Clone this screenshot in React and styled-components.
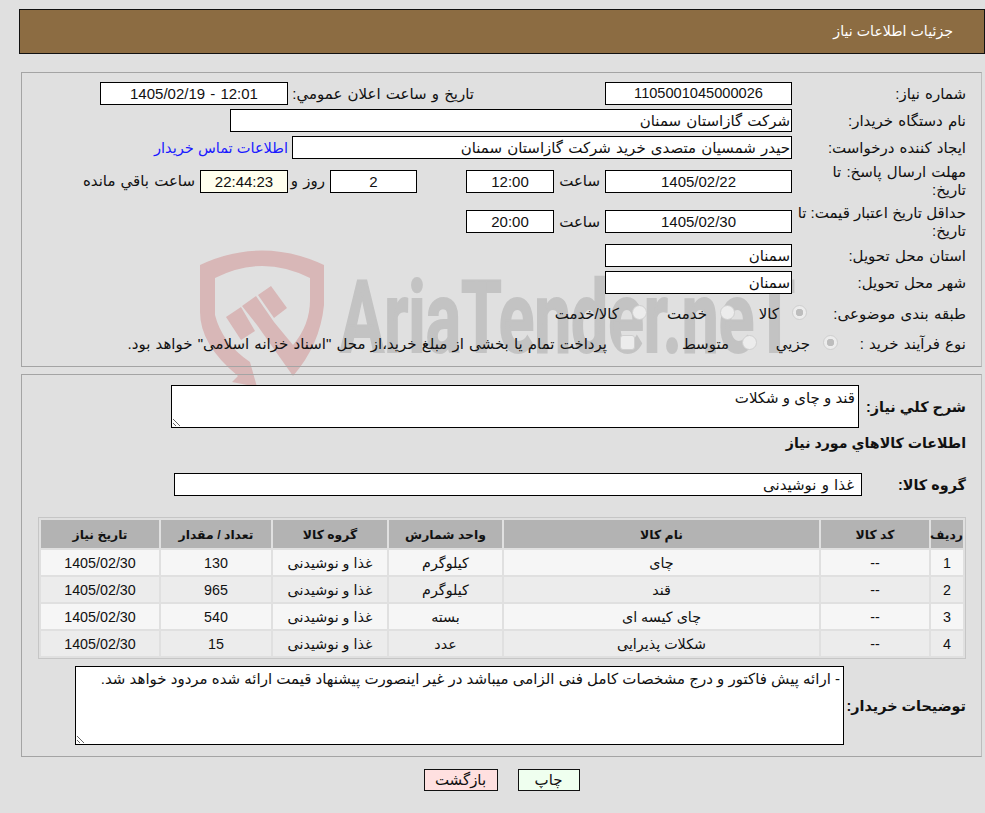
import React from 'react';
import styled, { createGlobalStyle } from 'styled-components';

const GlobalStyle = createGlobalStyle`
  html, body {
    margin: 0;
    padding: 0;
    background: #e0e0e0;
  }
  body {
    font-family: "Liberation Sans", "DejaVu Sans", sans-serif;
    font-size: 15px;
    word-spacing: 1px;
    color: #111;
  }
`;

const items = [
  { id: 1, code: '--', name: 'چای', unit: 'کیلوگرم', count: 130 },
  { id: 2, code: '--', name: 'قند', unit: 'کیلوگرم', count: 965 },
  { id: 3, code: '--', name: 'چای کیسه ای', unit: 'بسته', count: 540 },
  { id: 4, code: '--', name: 'شکلات پذیرایی', unit: 'عدد', count: 15 },
];

function Watermark() {
  return (
    <WatermarkSvg viewBox="0 0 985 400" width="985" height="400" aria-hidden="true">
      <g fill="#d8b7b7">
        <path d="M200 265 Q262 236 324 265 L324 305 Q320 345 293 376 L257 325 L242 306 L256 296 L274 322 L293 345 Q310 325 310 300 L310 278 Q262 254 215 278 L215 315 Q222 343 250 362 L257 387 L232 382 L238 376 Q200 345 200 312 Z" />
        <path d="M226 317 L241 307 L255 331 L241 340 Z" />
        <path d="M258 295 L271 286 L287 308 L274 318 Z" />
      </g>
      <WatermarkText x="340" y="352" textLength="455" lengthAdjust="spacingAndGlyphs">
        AriaTender.neT
      </WatermarkText>
    </WatermarkSvg>
  );
}

function App() {
  return (
    <Page dir="rtl">
      <GlobalStyle />
      <Watermark />
      <Header>جزئیات اطلاعات نیاز</Header>

      <InfoPanel>
        <Row>
          <Label>شماره نیاز:</Label>
          <Field $w={187} $center $size={14.6}>1105001045000026</Field>
          <InlineLabel $w={182} $mr={131}>تاریخ و ساعت اعلان عمومي:</InlineLabel>
          <Field $w={188} $mr={4} $center>1405/02/19 - 12:01</Field>
        </Row>
        <Row>
          <Label>نام دستگاه خریدار:</Label>
          <Field $w={562}>شرکت گازاستان سمنان</Field>
        </Row>
        <Row>
          <Label>ایجاد کننده درخواست:</Label>
          <Field $w={500}>حیدر شمسیان متصدی خرید شرکت گازاستان سمنان</Field>
          <ContactLink href="#">اطلاعات تماس خریدار</ContactLink>
        </Row>
        <Row $h={36}>
          <Label>مهلت ارسال پاسخ: تا<br />تاریخ:</Label>
          <Field $w={187} $center>1405/02/22</Field>
          <InlineLabel $w={46} $mr={5}>ساعت</InlineLabel>
          <Field $w={88} $center>12:00</Field>
          <Field $w={87} $mr={49} $center>2</Field>
          <InlineLabel $w={37} $mr={5}>روز و</InlineLabel>
          <Field $w={88} $center $tint>22:44:23</Field>
          <InlineLabel $w={120} $mr={5}>ساعت باقي مانده</InlineLabel>
        </Row>
        <Row $h={37}>
          <Label $tight>حداقل تاریخ اعتبار قیمت: تا<br />تاریخ:</Label>
          <Field $w={187} $center>1405/02/30</Field>
          <InlineLabel $w={46} $mr={5}>ساعت</InlineLabel>
          <Field $w={88} $center>20:00</Field>
        </Row>
        <Row>
          <Label>استان محل تحویل:</Label>
          <Field $w={187}>سمنان</Field>
        </Row>
        <Row>
          <Label>شهر محل تحویل:</Label>
          <Field $w={187}>سمنان</Field>
        </Row>
        <Row $mt={4}>
          <Label $w={159}>طبقه بندی موضوعی:</Label>
          <Option $w={72}><Radio $checked />کالا</Option>
          <Option $w={88}><Radio />خدمت</Option>
          <Option><Radio />کالا/خدمت</Option>
        </Row>
        <Row $mt={3}>
          <Label $w={128}>نوع فرآیند خرید :</Label>
          <Option $w={81}><Radio $checked />جزیي</Option>
          <Option $w={122}><Radio />متوسط</Option>
          <Option><Radio $square />پرداخت تمام یا بخشی از مبلغ خرید،از محل "اسناد خزانه اسلامی" خواهد بود.</Option>
        </Row>
      </InfoPanel>

      <GoodsPanel>
        <Row $h={43}>
          <BoldLabel $w={107}>شرح کلي نیاز:</BoldLabel>
          <Note $w={688} $h={43} readOnly value="قند و چای و شکلات" />
        </Row>
        <SectionTitle>اطلاعات کالاهاي مورد نیاز</SectionTitle>
        <Row>
          <BoldLabel $w={104}>گروه کالا:</BoldLabel>
          <Field $w={688} $pad={7}>غذا و نوشیدنی</Field>
        </Row>
        <GoodsTable>
          <colgroup>
            <col width="32" />
            <col width="108" />
            <col width="315" />
            <col width="113" />
            <col width="114" />
            <col width="110" />
            <col width="118" />
          </colgroup>
          <thead>
            <tr>
              <HeadCell>ردیف</HeadCell>
              <HeadCell>کد کالا</HeadCell>
              <HeadCell>نام کالا</HeadCell>
              <HeadCell>واحد شمارش</HeadCell>
              <HeadCell>گروه کالا</HeadCell>
              <HeadCell>تعداد / مقدار</HeadCell>
              <HeadCell>تاریخ نیاز</HeadCell>
            </tr>
          </thead>
          <tbody>
            {items.map(item => (
              <BodyRow key={item.id}>
                <Cell>{item.id}</Cell>
                <Cell>{item.code}</Cell>
                <Cell>{item.name}</Cell>
                <Cell>{item.unit}</Cell>
                <Cell>غذا و نوشیدنی</Cell>
                <Cell>{item.count}</Cell>
                <Cell>1405/02/30</Cell>
              </BodyRow>
            ))}
          </tbody>
        </GoodsTable>
        <NoteRow>
          <BoldLabel $w={122}>توضیحات خریدار:</BoldLabel>
          <Note
            $w={769}
            $h={79}
            readOnly
            value="- ارائه پیش فاکتور و درج مشخصات کامل فنی الزامی میباشد در غیر اینصورت پیشنهاد قیمت ارائه شده مردود خواهد شد."
          />
        </NoteRow>
      </GoodsPanel>

      <Actions>
        <ActionButton $bg="#efffef" $w={62}>چاپ</ActionButton>
        <ActionButton $bg="#ffe0e0" $w={74}>بازگشت</ActionButton>
      </Actions>
    </Page>
  );
}

const Page = styled.div`
  position: relative;
  z-index: 0;
  height: 813px;
  box-sizing: border-box;
  padding-top: 9px;
  overflow: hidden;
`;

const WatermarkSvg = styled.svg`
  position: absolute;
  top: 0;
  left: 0;
  z-index: -1;
`;

const WatermarkText = styled.text`
  font-family: Roboto, "Liberation Sans", sans-serif;
  font-size: 100px;
  font-weight: 700;
  fill: #c3c3c3;
  stroke: #c3c3c3;
  stroke-width: 2px;
  word-spacing: 0;
  direction: ltr;
`;

const Header = styled.div`
  box-sizing: border-box;
  height: 45px;
  margin-left: 19px;
  padding: 0 31px 0 0;
  border: 1px solid #111;
  background: #8c6c42;
  color: #fff;
  font-size: 14.2px;
  word-spacing: 0;
  line-height: 43px;
`;

const Panel = styled.div`
  box-sizing: border-box;
  width: 961px;
  margin-right: 3px;
  border: 1px solid #a4a4a4;
  border-right-color: #bdbdbd;
`;

const InfoPanel = styled(Panel)`
  height: 295px;
  margin-top: 18px;
  padding: 9px 15px 0 0;
  display: flex;
  flex-direction: column;
  gap: 4px;
`;

const GoodsPanel = styled(Panel)`
  height: 383px;
  margin-top: 7px;
  padding: 10px 15px 0 16px;
`;

const Row = styled.div`
  display: flex;
  align-items: center;
  height: ${({ $h }) => $h || 23}px;
  margin-top: ${({ $mt }) => $mt || 0}px;
`;

const Label = styled.div`
  flex: none;
  box-sizing: border-box;
  width: ${({ $w }) => $w || 174}px;
  line-height: 18px;
  word-spacing: ${({ $tight }) => ($tight ? 0 : 1)}px;
  white-space: nowrap;
`;

const BoldLabel = styled(Label)`
  font-size: 14.4px;
  font-weight: 700;
  word-spacing: 0;
`;

const InlineLabel = styled.div`
  flex: none;
  width: ${({ $w }) => $w}px;
  margin-right: ${({ $mr }) => $mr || 0}px;
  white-space: nowrap;
`;

const Field = styled.div`
  flex: none;
  box-sizing: border-box;
  width: ${({ $w }) => $w}px;
  height: 23px;
  margin-right: ${({ $mr }) => $mr || 0}px;
  padding: 0 ${({ $pad }) => $pad || 1}px;
  border: 1px solid #000;
  background: ${({ $tint }) => ($tint ? '#ffffee' : '#fff')};
  font-size: ${({ $size }) => $size || 15}px;
  line-height: 21px;
  text-align: ${({ $center }) => ($center ? 'center' : 'right')};
  direction: ${({ $center }) => ($center ? 'ltr' : 'rtl')};
  white-space: nowrap;
  overflow: hidden;
`;

const ContactLink = styled.a`
  margin-right: 4px;
  color: #1a1aff;
  font-size: 14.6px;
  word-spacing: 0;
  text-decoration: none;
  white-space: nowrap;
`;

const Option = styled.div`
  flex: none;
  display: flex;
  align-items: center;
  gap: 13px;
  width: ${({ $w }) => ($w ? `${$w}px` : 'auto')};
  white-space: nowrap;
`;

const Radio = styled.span`
  flex: none;
  box-sizing: border-box;
  width: 15px;
  height: 15px;
  margin-bottom: 2px;
  border: 1.5px solid #cfcfcf;
  border-radius: ${({ $square }) => ($square ? '3px' : '50%')};
  background: ${({ $checked }) =>
    $checked
      ? 'radial-gradient(circle, #bdbdbd 0 3.5px, #ececec 4px)'
      : '#ececec'};
`;

const Note = styled.textarea`
  flex: none;
  display: block;
  box-sizing: border-box;
  width: ${({ $w }) => $w}px;
  height: ${({ $h }) => $h}px;
  margin: 0;
  padding: 3px;
  border: 1px solid #000;
  border-radius: 0;
  outline: none;
  background: #fff;
  color: #111;
  font-family: inherit;
  font-size: 15px;
  word-spacing: 0;
  line-height: 18px;
  overflow: hidden;
`;

const SectionTitle = styled.div`
  height: 22px;
  margin: 4px 0 19px;
  font-size: 14.2px;
  font-weight: 700;
  word-spacing: 0;
  line-height: 22px;
`;

const GoodsTable = styled.table`
  box-sizing: border-box;
  table-layout: fixed;
  width: 928px;
  margin-top: 21px;
  border: 1px solid #c6c6c6;
  border-spacing: 2px;
`;

const HeadCell = styled.th`
  height: 28px;
  padding: 0;
  background: #b3b3b3;
  font-size: 12.4px;
  font-weight: 700;
  word-spacing: 0;
  text-align: center;
`;

const BodyRow = styled.tr`
  background: #f6f6f6;
  &:nth-child(even) {
    background: #ececec;
  }
`;

const Cell = styled.td`
  height: 25px;
  padding: 0;
  font-size: 14.3px;
  word-spacing: 0;
  text-align: center;
`;

const NoteRow = styled(Row)`
  height: 79px;
  margin-top: 7px;
`;

const Actions = styled.div`
  display: flex;
  justify-content: center;
  gap: 20px;
  width: 961px;
  margin: 12px 3px 0 0;
`;

const ActionButton = styled.button`
  box-sizing: border-box;
  width: ${({ $w }) => $w}px;
  height: 22px;
  padding: 0;
  border: 1px solid #111;
  border-radius: 0;
  background: ${({ $bg }) => $bg};
  color: #111;
  font-family: inherit;
  font-size: 15px;
  line-height: 20px;
`;

export default App;
